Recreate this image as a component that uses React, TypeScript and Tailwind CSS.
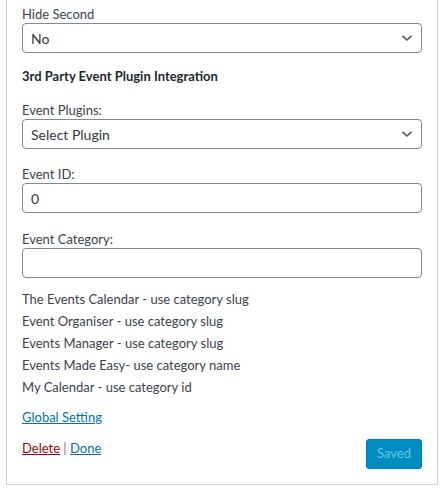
import React from "react";

const Chevron = () => (
  <svg width="12" height="8" viewBox="0 0 12 8" className="absolute right-[8px] top-1/2 -translate-y-1/2" fill="none">
    <path d="M1.5 1.8 L6 6 L10.5 1.8" stroke="#50575e" strokeWidth="1.6" />
  </svg>
);

const Select = ({ value }: { value: string }) => (
  <div className="relative h-[30px] border border-[#7e8993] rounded-[4px] bg-white flex items-center pl-[8px] text-[14px] text-[#32373c]">
    {value}
    <Chevron />
  </div>
);

const Input = ({ value }: { value: string }) => (
  <div className="h-[30px] border border-[#7e8993] rounded-[4px] bg-white flex items-center pl-[8px] text-[14px] text-[#32373c]">
    {value}
  </div>
);

export default function App() {
  return (
    <div className="w-[444px] h-[493px] bg-white" style={{ fontFamily: 'Lato, "Noto Sans", sans-serif' }}>
      <div className="ml-[6px] w-[432px] border-x border-b border-[#ccd0d4] px-[15px] pt-[5px] pb-[15px] text-[13px] text-[#3c434a] flex flex-col">
        <div className="leading-[18px]">Hide Second</div>
        <Select value="No" />
        <div className="mt-[14px] leading-[18px] font-bold text-[#23282d]">3rd Party Event Plugin Integration</div>
        <div className="mt-[16px] leading-[18px]">Event Plugins:</div>
        <Select value="Select Plugin" />
        <div className="mt-[16px] leading-[18px]">Event ID:</div>
        <Input value="0" />
        <div className="mt-[17px] leading-[18px]">Event Category:</div>
        <Input value="" />
        <div className="mt-[10px] flex flex-col leading-[22px]">
          <div>The Events Calendar - use category slug</div>
          <div>Event Organiser - use category slug</div>
          <div>Events Manager - use category slug</div>
          <div>Events Made Easy- use category name</div>
          <div>My Calendar - use category id</div>
        </div>
        <div className="mt-[10px] leading-[18px]">
          <a className="text-[#0073aa] underline">Global Setting</a>
        </div>
        <div className="mt-[12px] flex justify-between items-start">
          <div className="leading-[18px] mt-[1px]">
            <a className="text-[#a00] underline">Delete</a>
            <span className="text-[#72777c]"> | </span>
            <a className="text-[#0073aa] underline">Done</a>
          </div>
          <div className="mt-[1px] h-[30px] w-[56px] rounded-[3px] bg-[#008ec2] border border-[#007cb2] text-[#66c6e4] flex items-center justify-center">
            Saved
          </div>
        </div>
      </div>
    </div>
  );
}
